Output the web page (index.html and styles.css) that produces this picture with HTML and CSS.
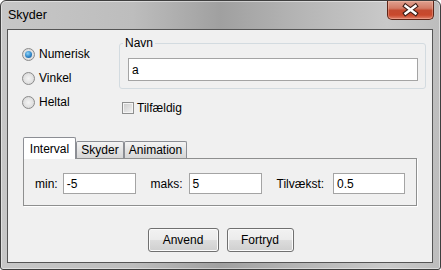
FILE: index.html
```html
<!DOCTYPE html>
<html>
<head>
<meta charset="utf-8">
<link rel="stylesheet" href="styles.css">
</head>
<body>
<div class="window">
  <div class="titlebar">
    <span class="title">Skyder</span>
    <div class="close">
      <svg width="45" height="18" viewBox="0 0 45 18">
        <path d="M17.5 5 L27.5 12.5 M27.5 5 L17.5 12.5" stroke="#3b1c16" stroke-width="4.6" stroke-linecap="square"/>
        <path d="M17.5 5 L27.5 12.5 M27.5 5 L17.5 12.5" stroke="#ffffff" stroke-width="2.4" stroke-linecap="square"/>
      </svg>
    </div>
  </div>
  <div class="content">
    <div class="top">
      <div class="radios">
        <label class="radio-row"><span class="radio checked"></span>Numerisk</label>
        <label class="radio-row"><span class="radio"></span>Vinkel</label>
        <label class="radio-row"><span class="radio"></span>Heltal</label>
      </div>
      <div class="right">
        <fieldset class="namebox">
          <legend>Navn</legend>
          <div class="field wide">a</div>
        </fieldset>
        <label class="check-row"><span class="checkbox"></span>Tilfældig</label>
      </div>
    </div>
    <div class="tabbed">
      <div class="tabs">
        <div class="tab selected t1">Interval</div>
        <div class="tab t2">Skyder</div>
        <div class="tab t3">Animation</div>
      </div>
      <div class="panel">
        <span class="lbl">min:</span><div class="field small">-5</div>
        <span class="lbl gap">maks:</span><div class="field small">5</div>
        <span class="lbl gap">Tilvækst:</span><div class="field small last">0.5</div>
      </div>
    </div>
    <div class="buttons">
      <div class="btn b1">Anvend</div>
      <div class="btn b2">Fortryd</div>
    </div>
  </div>
</div>
</body>
</html>
```
FILE: styles.css
```css
* { box-sizing: border-box; }
html, body { margin: 0; padding: 0; background: #ffffff; }
body {
  font-family: "Liberation Sans", Arial, sans-serif;
  font-size: 12px;
  color: #000;
}
.window {
  width: 441px;
  height: 270px;
  border: 1px solid #3f3f3f;
  border-radius: 6px 6px 3px 3px;
  background: linear-gradient(90deg, #c7c7c7 0%, #bdbdbd 30%, #a0a0a0 50%, #b5b5b5 68%, #c9c9c9 88%, #bdbdbd 100%);
  box-shadow: inset 0 0 0 1px rgba(255,255,255,0.45);
  display: flex;
  flex-direction: column;
}
.titlebar {
  height: 28px;
  display: flex;
  justify-content: space-between;
  align-items: center;
  padding-left: 7px;
}
.title { line-height: 14px; color: #000; font-size: 12.5px; }
.close {
  align-self: flex-start;
  width: 47px;
  height: 19px;
  margin-right: 6px;
  border: 1px solid #5e2518;
  border-top: none;
  border-radius: 0 0 5px 5px;
  background: linear-gradient(#dfa08f 0%, #d27b66 40%, #c44a30 52%, #c9482c 78%, #e0806a 100%);
  box-shadow: inset 0 0 0 1px rgba(255,210,190,0.35);
}
.close svg { display: block; }
.content {
  flex: 1;
  margin: 0 7px 6px 6px;
  border: 1px solid #555;
  background: #f0f0f0;
  padding: 6px 15px 0 14px;
  display: flex;
  flex-direction: column;
}
.top {
  display: flex;
  margin-right: -9px;
}
.radios {
  width: 97px;
  flex-shrink: 0;
  padding-top: 6px;
}
.radio-row {
  height: 24px;
  display: flex;
  align-items: center;
  line-height: 14px;
}
.radio {
  width: 13px;
  height: 13px;
  border-radius: 50%;
  border: 1px solid #8a8a8a;
  background: radial-gradient(circle at 50% 50%, #f4f4f4 0%, #e2e2e2 55%, #cfcfcf 100%);
  margin-right: 4px;
  display: flex;
  align-items: center;
  justify-content: center;
}
.radio.checked::after {
  content: "";
  width: 7px;
  height: 7px;
  border-radius: 50%;
  background: radial-gradient(circle at 40% 35%, #8fd4f8 0%, #2f86c8 55%, #1c4f8c 100%);
}
.right { flex: 1; }
.namebox {
  margin: 0;
  padding: 8px 7px 7px 8px;
  border: 1px solid #d3dbe0;
  border-radius: 3px;
  min-width: 0;
}
.namebox legend {
  padding: 0 2px;
  margin-left: -5px;
  line-height: 14px;
  font-size: 12px;
}
.field {
  background: #fff;
  border: 1px solid #a4a4a4;
  padding-left: 3px;
  display: flex;
  align-items: center;
  line-height: 14px;
}
.field.wide { height: 23px; width: 100%; }
.check-row {
  margin-top: 12px;
  height: 14px;
  display: flex;
  align-items: center;
  line-height: 14px;
}
.checkbox {
  width: 12px;
  height: 12px;
  margin-left: 3px;
  margin-right: 3px;
  border: 1px solid #8e8f8f;
  background: linear-gradient(135deg, #cbcbcb, #f2f2f2);
  box-shadow: inset 0 0 0 1px #f4f4f4;
}
.tabbed {
  margin-top: 22px;
  margin-left: 1px;
}
.tabs {
  display: flex;
  align-items: flex-end;
  height: 21px;
}
.tab {
  border: 1px solid #8c8e94;
  border-bottom: none;
  border-radius: 2px 2px 0 0;
  display: flex;
  align-items: center;
  justify-content: center;
  line-height: 14px;
  height: 17px;
  background: linear-gradient(#f4f4f4, #e4e4e4 50%, #d6d6d6);
}
.tab.selected {
  height: 22px;
  margin-bottom: -1px;
  background: #fff;
  position: relative;
  z-index: 1;
}
.t1 { width: 53px; }
.t2 { width: 48px; }
.t3 { width: 63px; }
.panel {
  border: 1px solid #8e8f8f;
  background: #f0f0f0;
  box-shadow: 1px 1px 0 #ffffff;
  padding: 14px 11px 11px 11px;
  display: flex;
  align-items: center;
}
.lbl { line-height: 14px; margin-right: 5px; }
.lbl.gap { margin-left: 15px; margin-right: 6px; }
.field.small { width: 73px; height: 21px; }
.field.last { width: 72px; margin-left: 3px; }
.buttons {
  margin-top: 22px;
  padding-left: 2px;
  display: flex;
  justify-content: center;
  gap: 8px;
}
.btn {
  height: 24px;
  border: 1px solid #707070;
  border-radius: 3px;
  background: linear-gradient(#f2f2f2 0%, #ebebeb 50%, #dddddd 50%, #cfcfcf 100%);
  box-shadow: inset 0 0 0 1px #fbfbfb;
  display: flex;
  align-items: center;
  justify-content: center;
  line-height: 14px;
}
.b1 { width: 71px; }
.b2 { width: 67px; }
```
